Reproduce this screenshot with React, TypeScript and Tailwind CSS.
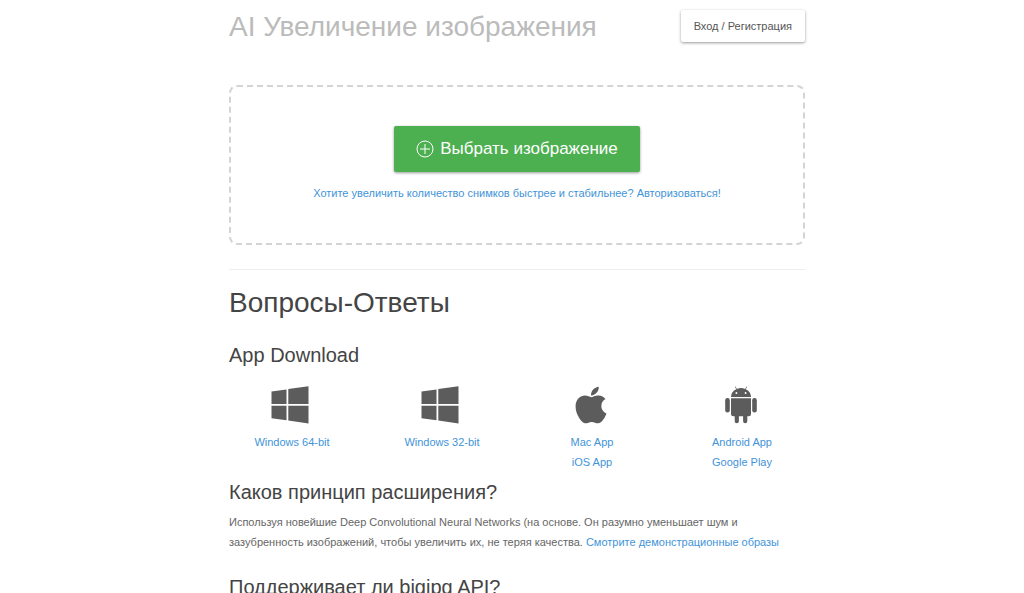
import { type ReactNode } from "react";
import { FaApple } from "react-icons/fa";

interface Download {
  icon: ReactNode;
  links: string[];
}

function WindowsIcon() {
  return (
    <svg viewBox="0 0 38 38" className="mr-1 h-[38px] w-[38px]" fill="currentColor" aria-hidden="true">
      <path d="M0.5 5.6 15.5 3.4V18H0.5zM17.3 3.1 37.5 0.2V18H17.3zM0.5 19.8H15.5V34.3L0.5 32.2zM17.3 19.8H37.5V37.6L17.3 34.6z" />
    </svg>
  );
}

function AndroidIcon() {
  return (
    <svg viewBox="0 0 32 38" className="mr-0.5 h-[38px] w-8" fill="currentColor" aria-hidden="true">
      <path
        fillRule="evenodd"
        d="M6 11C6 7.4 8 4.6 11.3 3.2L9.9 0.7 10.5 0.4 11.9 2.9A11.500 11.500 0 0 1 20.1 2.9L21.5 0.4 22.1 0.7 20.7 3.2C24 4.6 26 7.4 26 11zM11.4 6a0.95 0.95 0 1 0 0 1.9 0.95 0.95 0 0 0 0-1.9zM20.6 6a0.95 0.95 0 1 0 0 1.9 0.95 0.95 0 0 0 0-1.9z"
      />
      <path d="M6 12.3H26V28A2.2 2.2 0 0 1 23.8 30.2H22.3V35.2A2.1 2.1 0 0 1 18.1 35.2V30.2H13.9V35.2A2.1 2.1 0 0 1 9.7 35.2V30.2H8.2A2.2 2.2 0 0 1 6 28z" />
      <rect x="0.2" y="12" width="4.600" height="14.500" rx="2.200" />
      <rect x="27.2" y="12" width="4.600" height="14.500" rx="2.200" />
    </svg>
  );
}

function PlusCircleIcon() {
  return (
    <svg viewBox="0 0 18 18" className="h-[18px] w-[18px]" fill="none" stroke="currentColor" aria-hidden="true">
      <circle cx="9" cy="9" r="8" />
      <path d="M9 4v10M4 9h10" />
    </svg>
  );
}

const downloads: Download[] = [
  { icon: <WindowsIcon />, links: ["Windows 64-bit"] },
  { icon: <WindowsIcon />, links: ["Windows 32-bit"] },
  { icon: <FaApple className="mr-0.5 h-[42px] w-[42px]" aria-hidden="true" />, links: ["Mac App", "iOS App"] },
  { icon: <AndroidIcon />, links: ["Android App", "Google Play"] },
];

export default function App() {
  return (
    <div className="bg-white pl-[10px] font-['Liberation_Sans',Arial,sans-serif] text-[11px] leading-5 text-[#666]">
      <div className="mx-auto max-w-[600px] px-3">
        <header className="flex items-start justify-between pt-[10px]">
          <h1 className="text-[28px] leading-[34px] text-[#bbb]">AI Увеличение изображения</h1>
          <button
            type="button"
            className="h-8 rounded-xs bg-white px-[13px] text-[#555] shadow-[0_1px_3px_rgba(0,0,0,0.4)]"
          >
            Вход / Регистрация
          </button>
        </header>

        <main>
          {/* Upload area */}
          <section className="mt-[41px] flex flex-col items-center rounded-lg border-2 border-dashed border-[#d4d4d4] pt-[39px] pb-10">
            <button
              type="button"
              className="flex h-[46px] items-center gap-[6px] rounded-xs bg-[#4caf50] px-[22px] text-[17px] text-white shadow-[0_1px_3px_rgba(0,0,0,0.4)]"
            >
              <PlusCircleIcon />
              Выбрать изображение
            </button>
            <a href="#login" className="mt-[11px] text-[#3f94d9]">
              Хотите увеличить количество снимков быстрее и стабильнее? Авторизоваться!
            </a>
          </section>

          <hr className="mt-6 border-[#eee]" />

          {/* FAQ */}
          <h2 className="mt-4 text-[28px] leading-[34px] text-[#444]">Вопросы-Ответы</h2>

          <h3 className="mt-[23px] text-xl leading-6 text-[#444]">App Download</h3>
          <div className="-mx-3 mt-[19px] grid grid-cols-4">
            {downloads.map(({ icon, links }) => (
              <div key={links[0]} className="flex flex-col items-center">
                <div className="mb-2 flex h-[38px] items-center justify-center text-[#5c5c5c]">{icon}</div>
                {links.map((label) => (
                  <a key={label} href="#download" className="text-[#3f94d9]">
                    {label}
                  </a>
                ))}
              </div>
            ))}
          </div>

          <h3 className="mt-2 text-xl leading-6 text-[#444]">Каков принцип расширения?</h3>
          <p className="mt-2">
            Используя новейшие Deep Convolutional Neural Networks (на основе. Он разумно уменьшает шум и
            зазубренность изображений, чтобы увеличить их, не теряя качества.{" "}
            <a href="#demo" className="text-[#3f94d9]">
              Смотрите демонстрационные образы
            </a>
          </p>

          <h3 className="mt-[23px] text-xl leading-6 text-[#444]">Поддерживает ли bigjpg API?</h3>
        </main>
      </div>
    </div>
  );
}
